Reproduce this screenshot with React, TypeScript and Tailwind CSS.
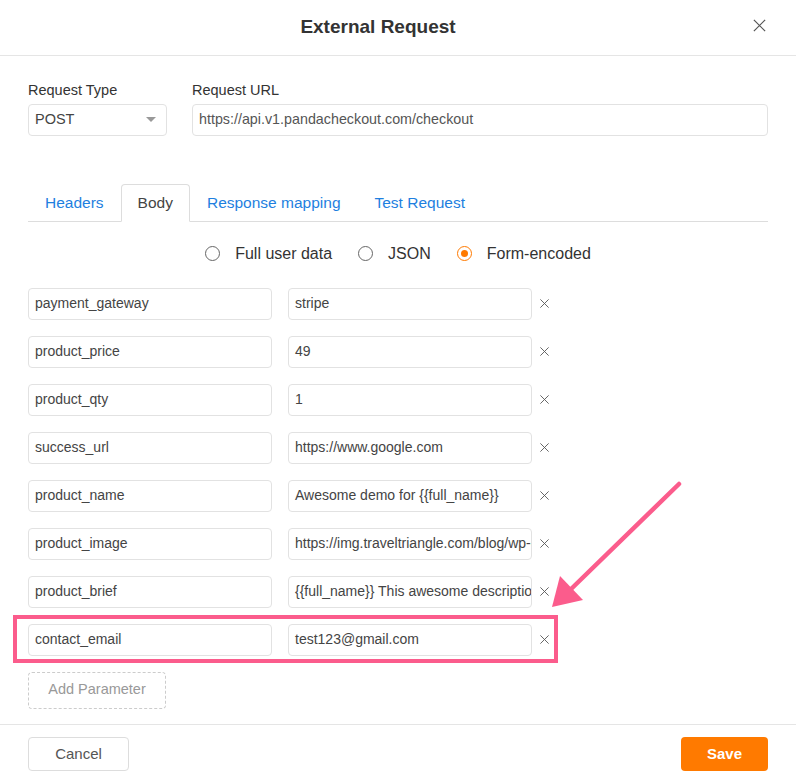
import { useState } from 'react';

const params = [
  { key: 'payment_gateway', value: 'stripe' },
  { key: 'product_price', value: '49' },
  { key: 'product_qty', value: '1' },
  { key: 'success_url', value: 'https://www.google.com' },
  { key: 'product_name', value: 'Awesome demo for {{full_name}}' },
  { key: 'product_image', value: 'https://img.traveltriangle.com/blog/wp-content/uploads/2018/01/cover.jpg' },
  { key: 'product_brief', value: '{{full_name}} This awesome description is for you' },
  { key: 'contact_email', value: 'test123@gmail.com' },
];

function CloseIcon({ className }: { className?: string }) {
  return (
    <svg viewBox="0 0 16 16" className={className} fill="none" stroke="currentColor" strokeWidth={1.3}>
      <path d="M2 2L14 14M14 2L2 14" />
    </svg>
  );
}

function Radio({ checked, label }: { checked: boolean; label: string }) {
  return (
    <label className="flex items-center gap-[15px] cursor-pointer">
      <span
        className={`w-[15px] h-[15px] rounded-full border-[1.5px] flex items-center justify-center ${
          checked ? 'border-[#ff7a00]' : 'border-[#666]'
        }`}
      >
        {checked && <span className="w-[7px] h-[7px] rounded-full bg-[#ff7a00]" />}
      </span>
      <span className="text-[16px] text-[#333]">{label}</span>
    </label>
  );
}

export default function App() {
  const [tab, setTab] = useState('Body');
  const tabs = ['Headers', 'Body', 'Response mapping', 'Test Request'];

  return (
    <div className="w-[796px] h-[783px] bg-white font-['Liberation_Sans',Arial,sans-serif] text-[#333] relative overflow-hidden">
      {/* Header */}
      <div className="h-[56px] border-b border-[#e5e5e5] flex items-center justify-center relative">
        <h1 className="text-[19px] font-bold text-[#333] mr-[40px]">External Request</h1>
        <button className="absolute right-[29px] top-[18px] text-[#555]">
          <CloseIcon className="w-[15px] h-[15px]" />
        </button>
      </div>

      {/* Body */}
      <div className="px-[28px] pt-[24px]">
        <div className="flex gap-[25px]">
          <div className="w-[139px]">
            <div className="text-[14.5px] text-[#333] mb-[2px]">Request Type</div>
            <div className="h-[32px] border border-[#e2e2e2] rounded-[4px] flex items-center justify-between px-[6px]">
              <span className="text-[14.5px] text-[#444]">POST</span>
              <span className="w-0 h-0 border-l-[5px] border-r-[5px] border-t-[5px] border-l-transparent border-r-transparent border-t-[#999] mr-[4px]" />
            </div>
          </div>
          <div className="flex-1">
            <div className="text-[14.5px] text-[#333] mb-[2px]">Request URL</div>
            <div className="h-[32px] border border-[#e2e2e2] rounded-[4px] flex items-center px-[6px]">
              <span className="text-[14.3px] text-[#555]">https://api.v1.pandacheckout.com/checkout</span>
            </div>
          </div>
        </div>

        {/* Tabs */}
        <div className="mt-[48px] flex border-b border-[#ddd] h-[38px]">
          {tabs.map((t) => (
            <button
              key={t}
              onClick={() => setTab(t)}
              className={`px-[16px] h-[38px] text-[15.5px] rounded-t-[4px] ${
                tab === t
                  ? 'text-[#444] border border-[#ddd] border-b-white bg-white -mb-px h-[38px]'
                  : 'text-[#1e7fe0] border border-transparent'
              }`}
            >
              {t}
            </button>
          ))}
        </div>

        {/* Radios */}
        <div className="flex justify-center gap-[26px] h-[66px] items-center -mt-px">
          <Radio checked={false} label="Full user data" />
          <Radio checked={false} label="JSON" />
          <Radio checked={true} label="Form-encoded" />
        </div>

        {/* Params */}
        <div className="flex flex-col gap-[16px] mt-[1px]">
          {params.map((p) => (
            <div key={p.key} className="flex items-center">
              <div className="w-[244px] h-[32px] border border-[#e2e2e2] rounded-[4px] flex items-center px-[6px] overflow-hidden">
                <span className="text-[14px] text-[#444] whitespace-nowrap">{p.key}</span>
              </div>
              <div className="w-[244px] h-[32px] ml-[16px] border border-[#e2e2e2] rounded-[4px] flex items-center px-[6px] overflow-hidden">
                <span className="text-[14px] text-[#444] whitespace-nowrap">{p.value}</span>
              </div>
              <button className="ml-[7px] text-[#555]">
                <CloseIcon className="w-[11px] h-[11px]" />
              </button>
            </div>
          ))}
        </div>

        <button className="mt-[16px] w-[138px] h-[37px] border border-dashed border-[#ccc] rounded-[4px] text-[14.5px] text-[#999]">
          Add Parameter
        </button>
      </div>

      {/* Footer */}
      <div className="absolute left-0 right-0 bottom-0 h-[59px] border-t border-[#e5e5e5] flex items-center justify-between px-[28px]">
        <button className="w-[101px] h-[34px] border border-[#ddd] rounded-[4px] text-[15px] text-[#555]">Cancel</button>
        <button className="w-[87px] h-[34px] bg-[#ff7a00] rounded-[4px] text-[15px] font-bold text-white">Save</button>
      </div>

      {/* Highlight annotation */}
      <div className="absolute left-[13px] top-[615px] w-[545px] h-[48px] border-[4px] border-[#fb5c8c] pointer-events-none" />
      <svg className="absolute left-0 top-0 pointer-events-none" width="796" height="783">
        <line x1="679" y1="484" x2="568" y2="592" stroke="#fb5c8c" strokeWidth="4.5" strokeLinecap="round" />
        <polygon points="552,607 583,600 560,576" fill="#fb5c8c" />
      </svg>
    </div>
  );
}
